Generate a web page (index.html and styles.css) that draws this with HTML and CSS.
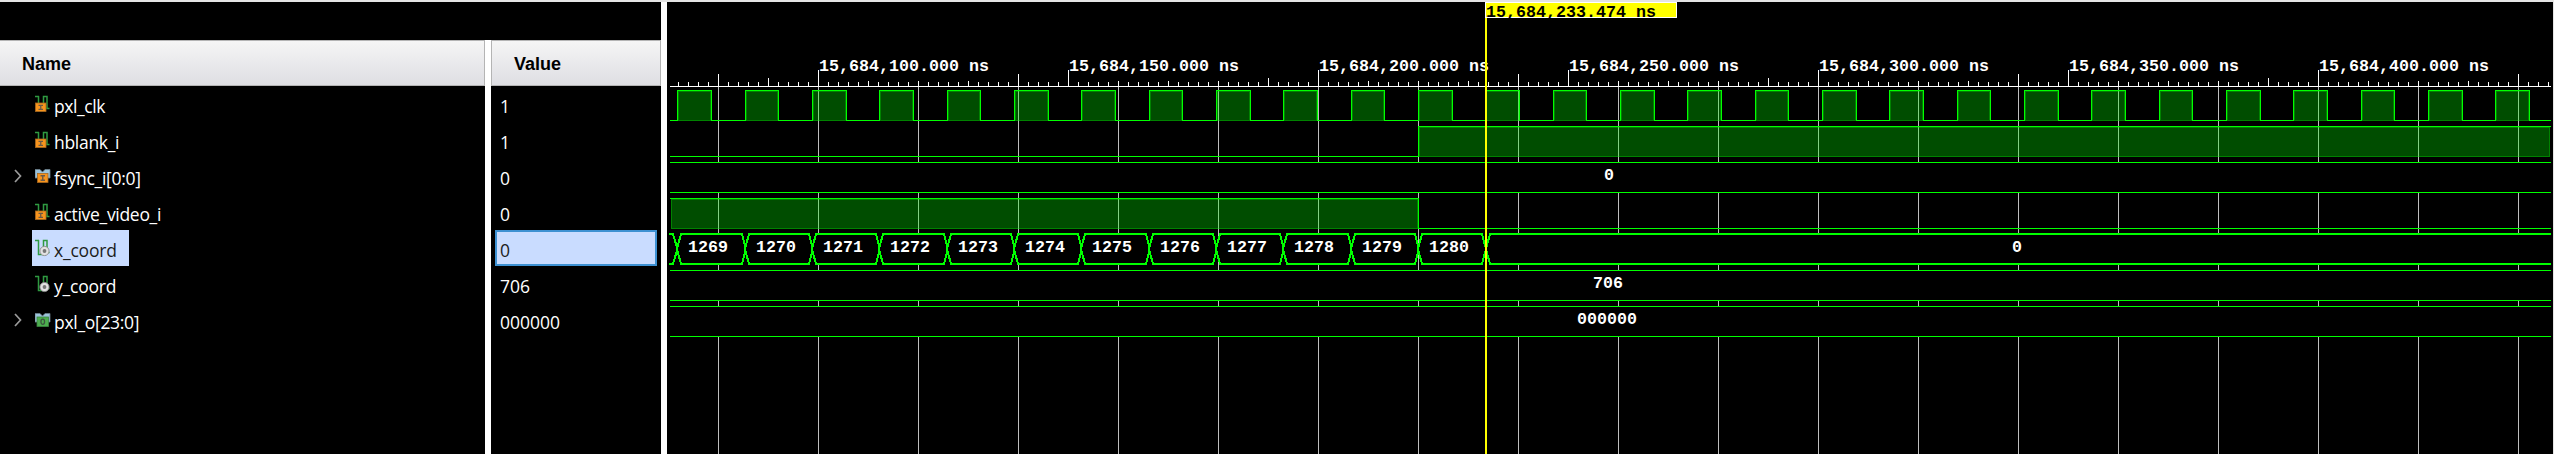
FILE: index.html
```html
<!DOCTYPE html>
<html lang="en">
<head>
<meta charset="utf-8">
<title>Waveform viewer</title>
<link rel="stylesheet" href="styles.css">
</head>
<body>
<svg class="defs" width="0" height="0">
  <defs>
    <symbol id="sig" viewBox="0 0 16 18">
      <path d="M0 1.5H4M3.500 1V15.500H8.500M8.500 15.500V1.500H12V13.500H14.500" fill="none" stroke="#2f9a41" stroke-width="1.500"/>
    </symbol>
    <symbol id="in" viewBox="0 0 16 18">
      <use href="#sig" width="16" height="18"/>
      <rect x="0.500" y="8" width="10.500" height="8.500" fill="#f7941d" stroke="#a8681e" stroke-width="0.800"/>
      <path d="M3.500 10.300H8M3.500 14.300H8M5.750 10V14.500" stroke="#6a5a48" stroke-width="1.300"/>
    </symbol>
    <symbol id="reg" viewBox="0 0 16 18">
      <use href="#sig" width="16" height="18"/>
      <circle cx="9.500" cy="12" r="4.600" fill="#e2e2e2" stroke="#8b8b8b" stroke-width="0.900"/>
      <circle cx="9.500" cy="12" r="1.900" fill="#777"/>
    </symbol>
    <symbol id="bus" viewBox="0 0 16 18">
      <path d="M0 2.500H5L7.500 5L10 2.500H15V11H0Z" fill="#9cc3da" stroke="#6b7f8b" stroke-width="0.800"/>
    </symbol>
    <symbol id="busin" viewBox="0 0 16 18">
      <use href="#bus" width="16" height="18"/>
      <rect x="2.500" y="6.500" width="10.500" height="9" fill="#f7941d" stroke="#a8681e" stroke-width="0.800"/>
      <path d="M5.500 8.800H10M5.500 13.200H10M7.750 8.500V13.500" stroke="#6a5a48" stroke-width="1.400"/>
    </symbol>
    <symbol id="busout" viewBox="0 0 16 18">
      <use href="#bus" width="16" height="18"/>
      <rect x="2" y="6" width="11.500" height="9.500" fill="#4cae4f" stroke="#3a8440" stroke-width="0.800"/>
      <ellipse cx="7.750" cy="10.800" rx="1.800" ry="2.600" fill="none" stroke="#3c5440" stroke-width="1.300"/>
    </symbol>
    <symbol id="chev" viewBox="0 0 8 14">
      <path d="M1 1L6.500 7L1 13" fill="none" stroke="#9a9a9a" stroke-width="1.700"/>
    </symbol>
  </defs>
</svg>
<main class="viewer">
  <section class="names">
    <header class="head">Name</header>
    <ul class="rows">
      <li><span class="arrow"></span><span class="item"><svg class="icon"><use href="#in"/></svg><span class="t clk">pxl_clk</span></span></li>
      <li><span class="arrow"></span><span class="item"><svg class="icon"><use href="#in"/></svg><span class="t">hblank_i</span></span></li>
      <li><span class="arrow"><svg class="chev"><use href="#chev"/></svg></span><span class="item"><svg class="icon"><use href="#busin"/></svg><span class="t">fsync_i[0:0]</span></span></li>
      <li><span class="arrow"></span><span class="item"><svg class="icon"><use href="#in"/></svg><span class="t">active_video_i</span></span></li>
      <li><span class="arrow"></span><span class="item selected"><svg class="icon"><use href="#reg"/></svg><span class="t coord">x_coord</span></span></li>
      <li><span class="arrow"></span><span class="item"><svg class="icon"><use href="#reg"/></svg><span class="t coord">y_coord</span></span></li>
      <li><span class="arrow"><svg class="chev"><use href="#chev"/></svg></span><span class="item"><svg class="icon"><use href="#busout"/></svg><span class="t">pxl_o[23:0]</span></span></li>
    </ul>
  </section>
  <div class="split"></div>
  <section class="values">
    <header class="head">Value</header>
    <ul class="rows">
      <li>1</li><li>1</li><li>0</li><li>0</li><li class="selected">0</li><li>706</li><li>000000</li>
    </ul>
  </section>
  <div class="divider"></div>
  <section class="waves">
    <svg id="wave" width="1886" height="452" viewBox="667 2 1886 452"></svg>
  </section>
</main>
<script src="wave.js"></script>
</body>
</html>
```
FILE: styles.css
```css
* { box-sizing: border-box; }
body { margin: 0; background: #000; overflow: hidden; }
.defs { position: absolute; }
.viewer {
  display: flex;
  width: 2554px;
  height: 454px;
  border-top: 2px solid #e4e4e4;
  border-right: 1px solid #e4e4e4;
}
.names, .values { padding-top: 38px; color: #fff; }
.names { width: 485px; }
.values { width: 170px; }
.split { width: 6px; margin-top: 38px; background: #fff; }
.divider { width: 6px; background: #fff; }
.waves { width: 1886px; }
.waves svg { display: block; }
.head {
  height: 46px;
  border: 1px solid #b4b4b4;
  border-left-width: 0;
  padding-left: 22px;
  background: linear-gradient(#f5f5f5, #dedee3);
  color: #000;
  font: bold 18px/46px "Liberation Sans", Arial, sans-serif;
}
.values .head { border-left-width: 1px; }
.rows {
  list-style: none;
  margin: 0;
  padding: 0;
  font: 17.5px/36px "Open Sans", "Noto Sans", sans-serif;
}
.rows li { display: flex; align-items: center; height: 36px; }
.arrow { display: flex; align-items: center; width: 32px; padding-left: 14px; }
.chev { width: 8px; height: 14px; }
.item { display: flex; align-items: center; height: 36px; padding: 0 13px 0 3px; }
.icon { width: 16px; height: 18px; margin-right: 3px; flex: none; }
.t { display: block; padding-top: 3px; white-space: nowrap; letter-spacing: -.3px; }
.clk { letter-spacing: -.4px; }
.coord { width: 62px; letter-spacing: -.2px; }
.item.selected, .values .selected { background: #c9dcff; color: #1c1c1c; }
.values li { padding: 3px 0 0 9px; }
.values .selected { width: 162px; margin-left: 4px; padding: 3px 0 0 3px; border: 2px solid #3d91d2; }
.grid { stroke: #bebebe; }
.ruler { stroke: #fff; }
.line { stroke: #0f0; fill: none; }
.bus { stroke: #0f0; stroke-width: 2; fill: #000; }
.fill { fill: #0f0; fill-opacity: .3; }
.edge { fill: none; stroke: #0f0; stroke-opacity: .3; }
.back { fill: #000; }
.label { font: bold 16.67px "Liberation Mono", monospace; fill: #fff; white-space: pre; }
.cursor { fill: #ff0; }
.flag { fill: #ff0; stroke: #fff; }
.flagtext { fill: #000; }
```
FILE: wave.js
```js
const svg = document.getElementById("wave");
const RIGHT = 2551, CURSOR = 1485.37, PERIOD = 67.34;

function add(name, attrs, text) {
  const el = document.createElementNS("http://www.w3.org/2000/svg", name);
  for (const key in attrs) el.setAttribute(key, attrs[key]);
  if (text !== undefined) el.textContent = text;
  svg.appendChild(el);
  return el;
}
const path = (cls, d) => add("path", { class: cls, d, "shape-rendering": "crispEdges" });
const rect = (cls, x, y, width, height) => add("rect", { class: cls, x, y, width, height, "shape-rendering": "crispEdges" });
const label = (x, y, text, cls = "") => add("text", { class: "label " + cls, x, y }, text);

// Shaded area under a high level, with a brighter inner outline.
function high(x0, x1, top) {
  rect("fill", x0, top + 1, x1 - x0, 30);
  path("edge", `M${x0 + .5} ${top + 1.5}H${x1 - .5}V${top + 30.5}H${x0 + .5}Z`);
}

// Gridlines
for (let x = 718; x < RIGHT; x += 100) path("grid", `M${x + .5} 87V454`);

// Time ruler
path("ruler", `M670 86.5H${RIGHT}`);
for (let x = 678; x < RIGHT; x += 10) {
  let top = 82;
  if ((x - 818) % 250 === 0) top = 70;
  else if (x === 718 || (x - 1018) % 500 === 0) top = 74;
  else if ((x - 768) % 500 === 0) top = 78;
  else if ((x - 818) % 50 === 0) top = 81;
  path("ruler", `M${x + .5} ${top}V86`);
}
for (let i = 0; i < 7; i++) label(819 + 250 * i, 71, `15,684,${100 + 50 * i}.000 ns`);

// pxl_clk: the low level is drawn only between pulses
let clock = "M670 120.5";
for (let k = -12; k <= 15; k++) {
  const rise = Math.round(CURSOR + PERIOD * k);
  const fall = Math.round(CURSOR + PERIOD * (k + .5));
  high(rise + 1, fall, 90);
  clock += `H${rise + .5}V90.5H${fall + .5}V120.5`;
}
path("line", clock + `H${RIGHT}`);

// hblank_i
high(1419, 2550, 126);
path("line", `M670 156.5H1418.5V126.5H${RIGHT}`);

// active_video_i
high(671, 1418, 198);
path("line", `M670 198.5H1418.5V228.5H${RIGHT}`);

// Constant buses
for (const [y, x, text] of [[162, 1604, "0"], [270, 1593, "706"], [306, 1577, "000000"]]) {
  rect("back", 670, y, RIGHT - 670, 31);
  path("line", `M670 ${y + .5}H${RIGHT}M670 ${y + 30.5}H${RIGHT}`);
  label(x, y + 18, text);
}

// x_coord
path("bus", "M669 234H673L677.5 249L673 264H669");
for (let k = -12; k < 0; k++) {
  const a = Math.round(CURSOR + PERIOD * k);
  const b = Math.round(CURSOR + PERIOD * (k + 1));
  path("bus", `M${a} 249L${a + 4} 234H${b - 3}L${b + 1} 249L${b - 3} 264H${a + 4}Z`);
  label(Math.round((a + b) / 2 - 23), 252, String(1281 + k));
}
path("bus", `M${RIGHT} 234H1490L1486 249L1490 264H${RIGHT}`);
label(2012, 252, "0");

// Cursor
rect("cursor", 1485, 18, 2, 436);
rect("flag", 1485.5, 2.5, 191, 15);
label(1486, 17, "15,684,233.474 ns", "flagtext");
```
